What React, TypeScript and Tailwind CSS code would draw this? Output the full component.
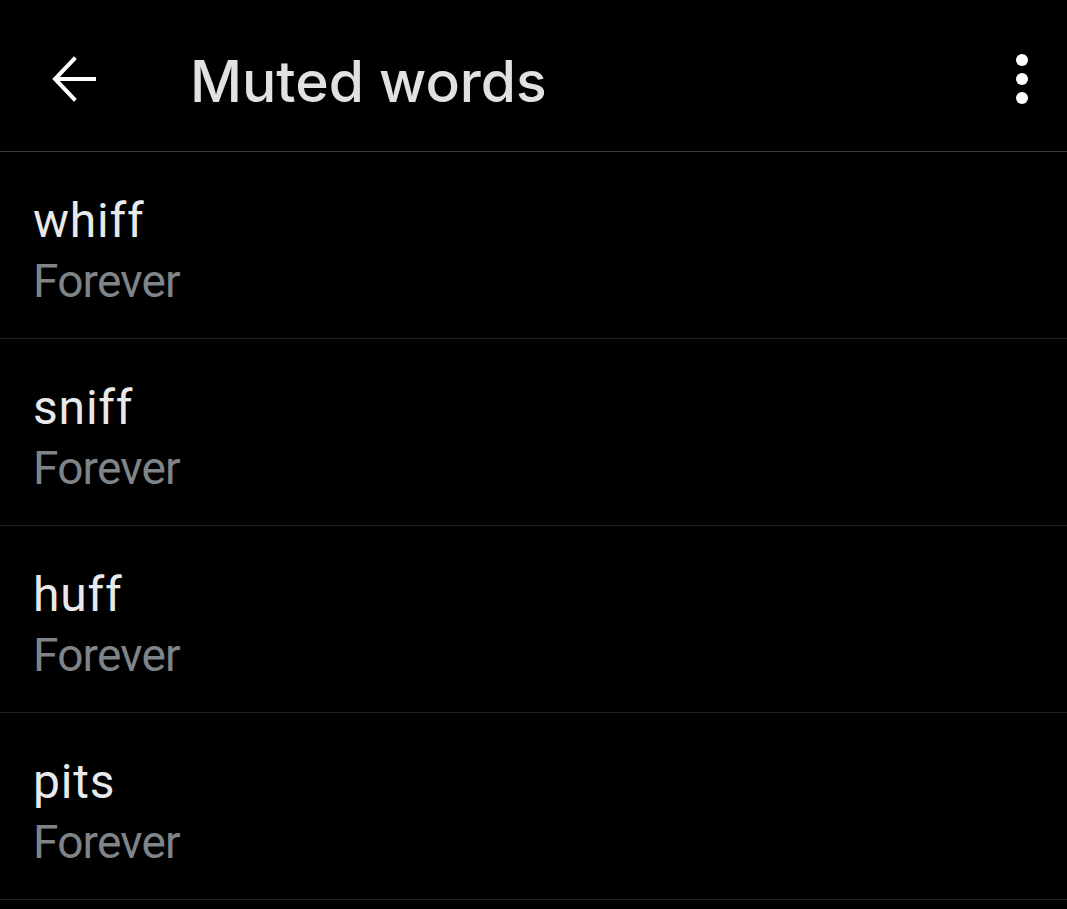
const words = ["whiff", "sniff", "huff", "pits"];

export default function App() {
  return (
    <div
      className="min-h-screen bg-black text-[#e7e9ea]"
      style={{ fontFamily: "Roboto, 'Noto Sans', sans-serif" }}
    >
      <header className="flex h-[152px] items-center border-b border-[#3a3a3c] pt-[6px]">
        <button className="ml-[51px] flex h-[46px] w-[46px] items-center justify-center">
          <svg
            width="46"
            height="46"
            viewBox="0 0 46 46"
            fill="none"
            stroke="#ffffff"
            strokeWidth="4"
            strokeLinecap="square"
          >
            <path d="M43 23H5" />
            <path d="M23 3 4 23l19 20" />
          </svg>
        </button>
        <h1
          className="ml-[93px] mt-[6px] text-[57px] font-medium text-[#e1e1e1]"
          style={{ fontFamily: "Inter, Roboto, sans-serif" }}
        >
          Muted words
        </h1>
        <button className="ml-auto mr-[39px] flex flex-col items-center gap-[7px]">
          <span className="h-[12px] w-[12px] rounded-full bg-white" />
          <span className="h-[12px] w-[12px] rounded-full bg-white" />
          <span className="h-[12px] w-[12px] rounded-full bg-white" />
        </button>
      </header>
      <ul>
        {words.map((w) => (
          <li
            key={w}
            className="border-b border-[#1f1f21] pl-[33px] pt-[39px] pb-[27px] leading-[60px]"
          >
            <div className="text-[48px] tracking-[0.8px] text-[#e7e9ea]">{w}</div>
            <div className="text-[46px] tracking-[-0.8px] text-[#7f8489]">Forever</div>
          </li>
        ))}
      </ul>
    </div>
  );
}
